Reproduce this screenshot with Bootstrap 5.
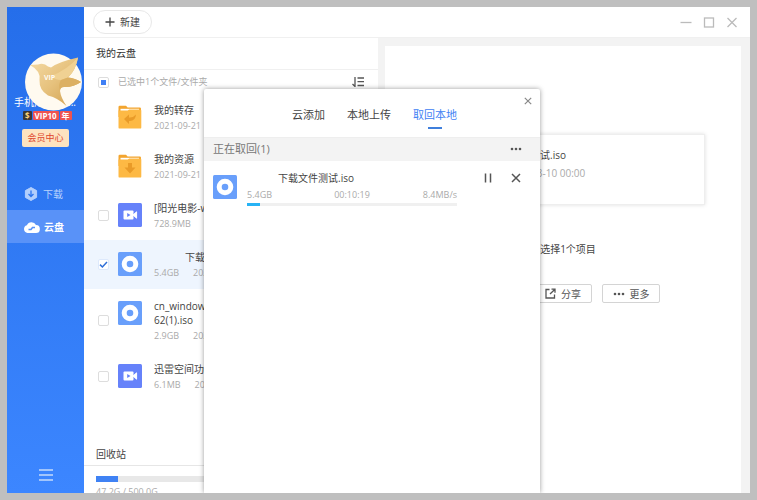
<!DOCTYPE html>
<html>
<head>
<meta charset="utf-8">
<meta name="viewport" content="width=device-width, initial-scale=1">
<title>我的云盘</title>
<link href="https://cdn.jsdelivr.net/npm/bootstrap@5.3.0/dist/css/bootstrap.min.css" rel="stylesheet">
<style>
body{font-family:"Open Sans","Noto Sans CJK SC",sans-serif;font-size:10px;line-height:14px;color:#444;background:#bfbfbf;padding:7px}
svg{display:block;flex-shrink:0}
button{color:inherit;line-height:inherit}
.bare{border:0;background:none;padding:0}
.muted{color:#aaa;font-size:9px;line-height:12px}
.side{width:77px;flex-shrink:0;background:linear-gradient(#256eea,#3c86ff);color:#fff;padding-top:46px}
.avatar{margin-left:18px;z-index:1}
.user-name{margin-top:-16px;padding-left:7px;padding-right:8px}
.vip-row{font-size:8px;line-height:9px;font-weight:700;margin-top:2px;padding-left:16px;gap:1px}
.vip-row span{background:#ef5350;color:#fff;padding:0 2px;border-radius:1px}
.vip-row .coin{background:#3b3535;color:#f8d27a}
.member{background:#fde3c0;color:#e0452c;font-size:9px;line-height:12px;border-radius:2px;margin:9px 15px 30px;padding:3px 0}
.side a{color:#b9d3fc;text-decoration:none;padding-left:16px;gap:4px;height:33px}
.side a.active{color:#fff;background:#5992f8;font-weight:700}
.topbar{height:31px;border-bottom:1px solid #f0f0f0;padding:0 12px 0 9px}
.new-btn{border:1px solid #e8e8e8;border-radius:12px;background:#fff;height:24px;padding:0 11px;gap:5px;font-size:10px}
.win-btns{gap:11px;color:#bbb}
.files{width:294px;flex-shrink:0}
.head{padding:8px 12px 9px;border-bottom:1px solid #f0f0f0;color:#333}
.pick{padding:6px 14px 5px;line-height:12px;gap:9px}
.tick{appearance:none;width:11px;height:11px;border:1px solid #ddd;border-radius:2px;margin:0;flex-shrink:0;background:#fff center/9px 9px no-repeat}
.tick.some{background-image:linear-gradient(#3f7ff5,#3f7ff5);background-size:5px 5px}
.tick:checked{border-color:#dde9fc;background-image:url("data:image/svg+xml,%3Csvg xmlns='http://www.w3.org/2000/svg' viewBox='0 0 9 9'%3E%3Cpath d='M1 4.6 3.4 7 8 2' fill='none' stroke='%232f6fd8' stroke-width='1.5'/%3E%3C/svg%3E")}
.file{padding:10px 8px 10px 14px;min-height:49px}
.file.on{background:#eef5fe}
.file .tick,.file .no-tick{width:11px;margin-right:9px}
.file-ico{width:24px;height:24px;align-self:flex-start;margin-top:2px;margin-right:12px}
.file .muted{margin-top:3px;gap:14px}
.named{padding-left:31px}
.bin{padding:5px 12px 4px;border-bottom:1px solid #e6e6e6}
.quota{padding:10px 12px 0;height:27px}
.quota .progress,.task .progress{border-radius:0;background:#e8e8e8;height:6px}
.quota .progress-bar{background:#3f82f4}
.detail{background:#f3f3f3;padding:8px 9px 0 7px}
.pane{background:#fff;padding:88px 36px 0}
.preview{border:1px solid #eee;box-shadow:0 0 4px #0002;height:71px;padding:13px 0 0 68px}
.preview .muted{font-size:10px;margin-top:5px;padding-left:15px}
.chosen{margin-top:37px;margin-bottom:28px}
.act{width:58px;height:19px;border:1px solid #d4d4d4;border-radius:2px;background:#fff;gap:5px;color:#555}
.acts{gap:10px}
.panel{position:absolute;left:197px;top:82px;bottom:0;width:336px;background:#fff;box-shadow:0 0 5px #0006;border-radius:2px 2px 0 0}
.close-x{position:absolute;right:8px;top:8px}
.tabs{font-size:11px;gap:22px;padding:18px 0 8px 5px;border-bottom:1px solid #eee}
.tabs button{line-height:16px;padding-bottom:6px}
.tabs .current{color:#3f82f4}
.tabs .current::after{content:"";display:block;width:14px;height:2px;margin:4px auto -6px;background:#3f7fdc}
.sub{background:#f3f3f3;font-size:11px;line-height:16px;padding:3px 18px 4px 9px;color:#777}
.task{padding:10px 18px 0 9px}
.task-body{margin-left:10px;margin-right:25px}
.task .muted{margin-top:4px;margin-bottom:2px}
.task .progress{height:3px;background:#f0f0f0}
.task .progress-bar{background:#27b3f5}
.task-btns{gap:16px;padding-top:1px}
</style>
<script src="https://cdn.jsdelivr.net/npm/bootstrap@5.3.0/dist/js/bootstrap.bundle.min.js"></script>
</head>
<body class="vh-100 overflow-hidden">
<svg width="0" height="0" class="position-absolute" aria-hidden="true">
<symbol id="disc" viewBox="0 0 24 24"><rect width="24" height="24" rx="1.5" fill="#699ffb"/><circle cx="12" cy="12" r="5.8" fill="none" stroke="#fff" stroke-width="5"/></symbol>
<symbol id="video" viewBox="0 0 24 24"><rect width="24" height="24" rx="1.5" fill="#6682fa"/><rect x="5.5" y="7.5" width="10" height="9" rx="1" fill="#fff"/><path d="m15 12 3.6-3.2v6.4z" fill="#fff" stroke="#fff" stroke-linejoin="round"/><path d="m9.2 10 3.3 2-3.3 2z" fill="#6682fa"/></symbol>
<symbol id="folder" viewBox="0 0 24 24"><path d="M.5 2Q.5.8 1.7.8H8l1.6 1.7h12.2q1.2 0 1.2 1.2V12H.5z" fill="#f3a52f"/><path d="M2.5 3.8H21v5H2.5z" fill="#fff"/><path d="M.5 5.6h9.2l1.6-1.2H22q1.3 0 1.3 1.2v16.8q0 1.2-1.2 1.2H1.8q-1.3 0-1.3-1.2z" fill="#fdb944"/></symbol>
<symbol id="dots" viewBox="0 0 12 4"><g fill="#555"><circle cx="2" cy="2" r="1.3"/><circle cx="6" cy="2" r="1.3"/><circle cx="10" cy="2" r="1.3"/></g></symbol>
</svg>
<div class="position-relative d-flex h-100 bg-white overflow-hidden">
  <aside class="side d-flex flex-column">
    <svg class="avatar position-relative" width="58" height="58" viewBox="0 0 58 58">
      <defs><linearGradient id="gold" x1="0" y1="0" x2="1" y2="1"><stop stop-color="#f5dba6"/><stop offset=".5" stop-color="#e6c17c"/><stop offset="1" stop-color="#cf9d4a"/></linearGradient></defs>
      <circle cx="28.500" cy="29" r="28.500" fill="#fffaf0"/>
      <path d="M5 12 13 11.500Q19 9.500 23 13.500L26 14.500Q33 9 53 4.500Q51 17 43 24.500Q50 25 56 29Q48 34.500 39 34Q35 34 35 38Q36 45 41.500 53Q33 45 23 42.500Q14 37 14.500 27Q16 18 5 12z" fill="url(#gold)"/>
      <path d="M53 4.500Q51 17 43 24.500L36 27Q30 27 26 23Q42 17 53 4.500z" fill="#f0d193"/>
      <path d="M36 27 43 24.500Q50 25 56 29Q48 34.500 39 34Q35 34 35 38Q33 31 36 27z" fill="#dcb063"/>
      <text x="19" y="27" font-size="7" font-weight="700" fill="#fffaf0">VIP</text>
    </svg>
    <div class="user-name d-flex justify-content-between"><span>手机用户</span><span>...</span></div>
    <div class="vip-row d-flex"><span class="coin">$</span><span>VIP10</span><span>年</span></div>
    <button class="member bare">会员中心</button>
    <nav>
      <a href="#" class="d-flex align-items-center"><svg width="16" height="16" viewBox="0 0 16 16"><path d="M8 1.500 13.600 4.600v6.800L8 14.500l-5.600-3.100V4.600z" fill="#b3cffc" stroke="#b3cffc" stroke-linejoin="round"/><path d="M8 4.500v6M5.500 8 8 10.500 10.500 8" fill="none" stroke="#2d75ee" stroke-width="1.300"/></svg>下载</a>
      <a href="#" class="active d-flex align-items-center"><svg width="17" height="14" viewBox="0 0 17 14"><path d="M4.500 13a4 4 0 0 1-.6-7.800A5 5 0 0 1 13 5a4 4 0 0 1-.3 8z" fill="#fff"/><path d="M5.500 9.500H8L9.500 7.500H12" fill="none" stroke="#5992f8" stroke-width="1.500"/></svg>云盘</a>
    </nav>
    <button class="bare mt-auto mx-auto mb-2 pb-1" aria-label="菜单"><svg width="14" height="12" viewBox="0 0 14 12"><path d="M0 1h14M0 6h14M0 11h14" stroke="#c3dafc" stroke-width="1.300"/></svg></button>
  </aside>

  <div class="flex-grow-1 d-flex flex-column">
    <header class="topbar d-flex align-items-center justify-content-between">
      <button class="new-btn d-flex align-items-center rounded-pill"><svg width="10" height="10" viewBox="0 0 10 10"><path d="M5 .5v9M.5 5h9" stroke="#444" stroke-width="1.300"/></svg>新建</button>
      <div class="win-btns d-flex">
        <button class="bare" aria-label="最小化"><svg width="12" height="11" viewBox="0 0 12 11"><path d="M.5 5.500h11" stroke="#bbb" stroke-width="1.300"/></svg></button>
        <button class="bare" aria-label="最大化"><svg width="12" height="11" viewBox="0 0 12 11"><rect x="1.500" y="1" width="9" height="9" fill="none" stroke="#bbb" stroke-width="1.300"/></svg></button>
        <button class="bare" aria-label="关闭"><svg width="12" height="11" viewBox="0 0 12 11"><path d="m1.500 1 9 9m0-9-9 9" stroke="#bbb" stroke-width="1.300"/></svg></button>
      </div>
    </header>
    <div class="flex-grow-1 d-flex overflow-hidden">
      <section class="files d-flex flex-column">
        <div class="head">我的云盘</div>
        <div class="pick d-flex align-items-center">
          <input type="checkbox" class="tick some" id="all"><label for="all" class="muted">已选中1个文件/文件夹</label>
          <button class="bare ms-auto" aria-label="排序"><svg width="12" height="10" viewBox="0 0 12 10"><path d="M3 0v9.500L.5 7M5.500 1H12M5.500 4.700H12M5.500 8.500H12" fill="none" stroke="#555" stroke-width="1.300"/></svg></button>
        </div>
        <div class="flex-grow-1 overflow-hidden">
          <div class="file d-flex align-items-center"><span class="no-tick"></span><svg class="file-ico" viewBox="0 0 24 24"><use href="#folder"/><path d="m6 14 5-4.500v3q4 .5 7-3-.5 7-7 6.500v3z" fill="#e99b28"/></svg><div class="align-self-start"><div>我的转存</div><div class="muted">2021-09-21</div></div></div>
          <div class="file d-flex align-items-center"><span class="no-tick"></span><svg class="file-ico" viewBox="0 0 24 24"><use href="#folder"/><path d="M10 9h4v4.500h3.500L12 19.500l-5.500-6H10z" fill="#e99b28"/></svg><div class="align-self-start"><div>我的资源</div><div class="muted">2021-09-21</div></div></div>
          <div class="file d-flex align-items-center"><input type="checkbox" class="tick" id="f3"><svg class="file-ico"><use href="#video"/></svg><div class="align-self-start"><label class="d-block" for="f3">[阳光电影-www]</label><div class="muted">728.9MB</div></div></div>
          <div class="file on d-flex align-items-center"><input type="checkbox" class="tick" id="f4" checked><svg class="file-ico"><use href="#disc"/></svg><div class="align-self-start"><label class="named d-block" for="f4">下载文件测试.iso</label><div class="muted d-flex"><span>5.4GB</span><span>2021-03-10</span></div></div></div>
          <div class="file d-flex align-items-center"><input type="checkbox" class="tick" id="f5"><svg class="file-ico"><use href="#disc"/></svg><div class="align-self-start"><label class="d-block" for="f5">cn_windows_10_x64_dvd_90<br>62(1).iso</label><div class="muted d-flex"><span>2.9GB</span><span>2021-03-10</span></div></div></div>
          <div class="file d-flex align-items-center"><input type="checkbox" class="tick" id="f6"><svg class="file-ico"><use href="#video"/></svg><div class="align-self-start"><label class="d-block" for="f6">迅雷空间功能</label><div class="muted d-flex"><span>6.1MB</span><span>2021-03-10</span></div></div></div>
        </div>
        <div class="bin">回收站</div>
        <div class="quota overflow-hidden"><div class="progress"><div class="progress-bar" style="width:8%"></div></div><div class="muted pt-1">47.2G / 500.0G</div></div>
      </section>
      <main class="detail flex-grow-1 d-flex">
        <div class="pane flex-grow-1">
          <div class="preview"><div>下载文件测试.iso</div><div class="muted">2021-03-10 00:00</div></div>
          <div class="chosen text-center">已选择1个项目</div>
          <div class="acts d-flex justify-content-center">
            <button class="act d-flex align-items-center justify-content-center p-0">取回</button>
            <button class="act d-flex align-items-center justify-content-center p-0"><svg width="11" height="11" viewBox="0 0 11 11"><path d="M4.500 1.500H1v8.500h8.500V6.500M6.500 1.200H10v3.500M10 1.200 5 6" fill="none" stroke="#555" stroke-width="1.300"/></svg>分享</button>
            <button class="act d-flex align-items-center justify-content-center p-0"><svg width="12" height="4"><use href="#dots"/></svg>更多</button>
          </div>
        </div>
      </main>
    </div>
  </div>

  <div class="panel" role="dialog" aria-label="传输列表">
    <button class="close-x bare" aria-label="关闭"><svg width="8" height="8" viewBox="0 0 8 8"><path d="m.8.8 6.400 6.400m0-6.400L.8 7.200" stroke="#888" stroke-width="1.200"/></svg></button>
    <div class="tabs d-flex justify-content-center align-items-start">
      <button class="bare">云添加</button><button class="bare">本地上传</button><button class="bare current">取回本地</button>
    </div>
    <div class="sub d-flex align-items-center justify-content-between"><span>正在取回(1)</span><button class="bare" aria-label="更多"><svg width="12" height="4"><use href="#dots"/></svg></button></div>
    <div class="task d-flex">
      <svg class="mt-1" width="24" height="24"><use href="#disc"/></svg>
      <div class="task-body flex-grow-1">
        <div class="named">下载文件测试.iso</div>
        <div class="muted d-flex"><span class="col">5.4GB</span><span class="col text-center">00:10:19</span><span class="col text-end">8.4MB/s</span></div>
        <div class="progress"><div class="progress-bar" style="width:6%"></div></div>
      </div>
      <div class="task-btns d-flex align-self-start">
        <button class="bare" aria-label="暂停"><svg width="12" height="12" viewBox="0 0 12 12"><path d="M3.500 1.500v9M8.500 1.500v9" stroke="#555" stroke-width="1.500"/></svg></button>
        <button class="bare" aria-label="取消"><svg width="12" height="12" viewBox="0 0 12 12"><path d="m2 2 8 8m0-8-8 8" stroke="#555" stroke-width="1.500"/></svg></button>
      </div>
    </div>
  </div>
</div>
</body>
</html>
